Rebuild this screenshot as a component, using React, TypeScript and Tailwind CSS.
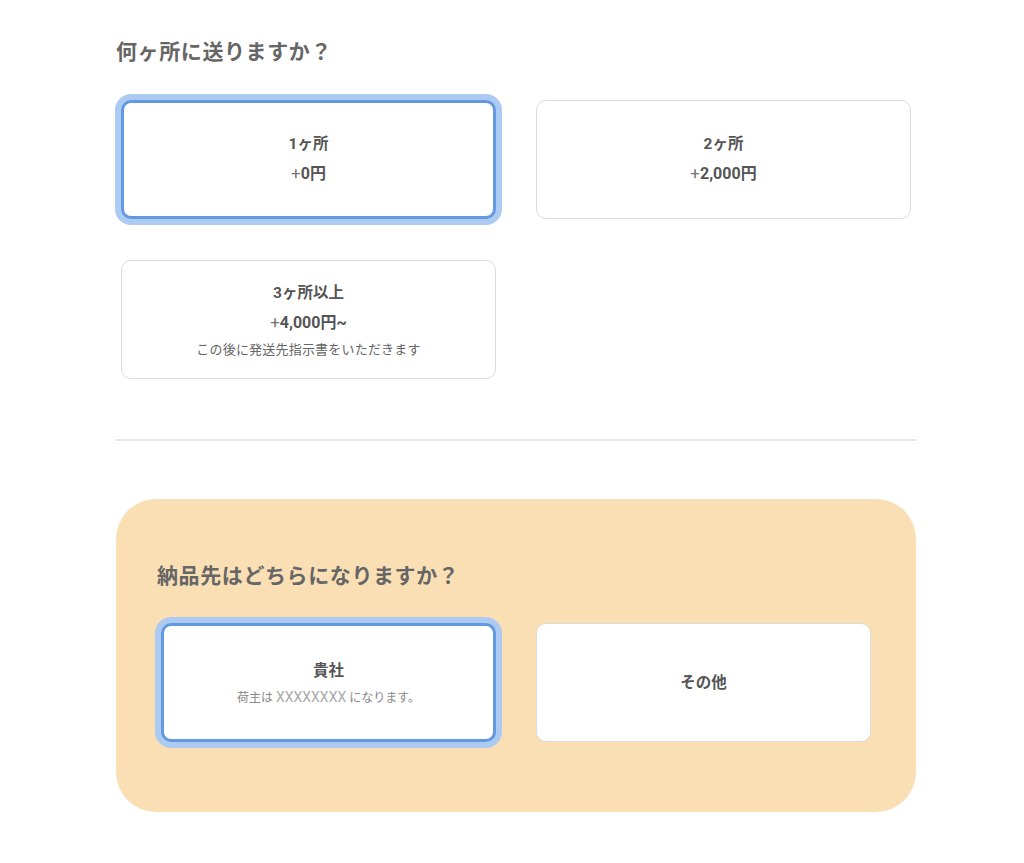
import React, { useState } from 'react';

const font = { fontFamily: 'Roboto, "Noto Sans CJK JP", sans-serif' };

type Option = {
  id: string;
  title: string;
  price?: string;
  note?: React.ReactNode;
};

const countOptions: Option[] = [
  { id: '1', title: '1ヶ所', price: '0円' },
  { id: '2', title: '2ヶ所', price: '2,000円' },
  { id: '3', title: '3ヶ所以上', price: '4,000円~', note: 'この後に発送先指示書をいただきます' },
];

const OptionCard: React.FC<{ option: Option; selected: boolean; onClick: () => void }> = ({ option, selected, onClick }) => (
  <button
    type="button"
    onClick={onClick}
    className={
      selected
        ? 'h-[119px] w-full rounded-[10px] bg-white border-[3px] border-[#6399e0] shadow-[0_0_0_6px_#adcbf2] flex flex-col items-center justify-center text-[#555]'
        : 'h-[119px] w-full rounded-[10px] bg-white border border-[#dcdcdc] flex flex-col items-center justify-center text-[#555]'
    }
  >
    {option.price ? (
      <div className={option.note ? 'pt-[2px]' : 'pb-[1px]'}>
        <div className="text-[15.5px] leading-[29px] font-bold">{option.title}</div>
        <div className="text-[16px] leading-[29px] font-bold">
          <span className="font-normal text-[17px] text-[#777]">+</span>
          {option.price}
        </div>
        {option.note && <div className="text-[13px] tracking-[0.2px] leading-[26px] text-[#666]">{option.note}</div>}
      </div>
    ) : (
      <div className={option.note ? 'pt-[4px]' : ''}>
        <div className="text-[15.5px] leading-[24px] font-bold">{option.title}</div>
        {option.note && <div className="mt-[2px] text-[12px] leading-[24px] text-[#888]">{option.note}</div>}
      </div>
    )}
  </button>
);

const App: React.FC = () => {
  const [count, setCount] = useState('1');
  const [dest, setDest] = useState('self');

  const destOptions: Option[] = [
    {
      id: 'self',
      title: '貴社',
      note: (
        <>
          荷主は <span className="text-[14px] text-[#aaa]">XXXXXXXX</span> になります。
        </>
      ),
    },
    { id: 'other', title: 'その他' },
  ];

  return (
    <div className="min-h-screen bg-white" style={font}>
      <div className="ml-[116px] w-[800px] pt-[38px] pb-[50px]">
        {/* Count section */}
        <h2 className="text-[21px] tracking-[0.6px] leading-[28px] font-bold text-[#666]">何ヶ所に送りますか？</h2>
        <div className="mt-[34px] px-[5px] grid grid-cols-2 gap-x-[40px] gap-y-[41px]">
          {countOptions.map((o) => (
            <OptionCard key={o.id} option={o} selected={count === o.id} onClick={() => setCount(o.id)} />
          ))}
        </div>

        <hr className="mt-[60px] border-0 h-[2px] bg-[#e6e6e6]" />

        {/* Destination section */}
        <div className="mt-[58px] rounded-[40px] bg-[#fadfb4] pt-[63px] pb-[70px]">
          <h2 className="pl-[41px] text-[21px] tracking-[0.6px] leading-[28px] font-bold text-[#666]">納品先はどちらになりますか？</h2>
          <div className="mt-[33px] px-[45px] grid grid-cols-2 gap-x-[40px]">
            {destOptions.map((o) => (
              <OptionCard key={o.id} option={o} selected={dest === o.id} onClick={() => setDest(o.id)} />
            ))}
          </div>
        </div>
      </div>
    </div>
  );
};

export default App;
